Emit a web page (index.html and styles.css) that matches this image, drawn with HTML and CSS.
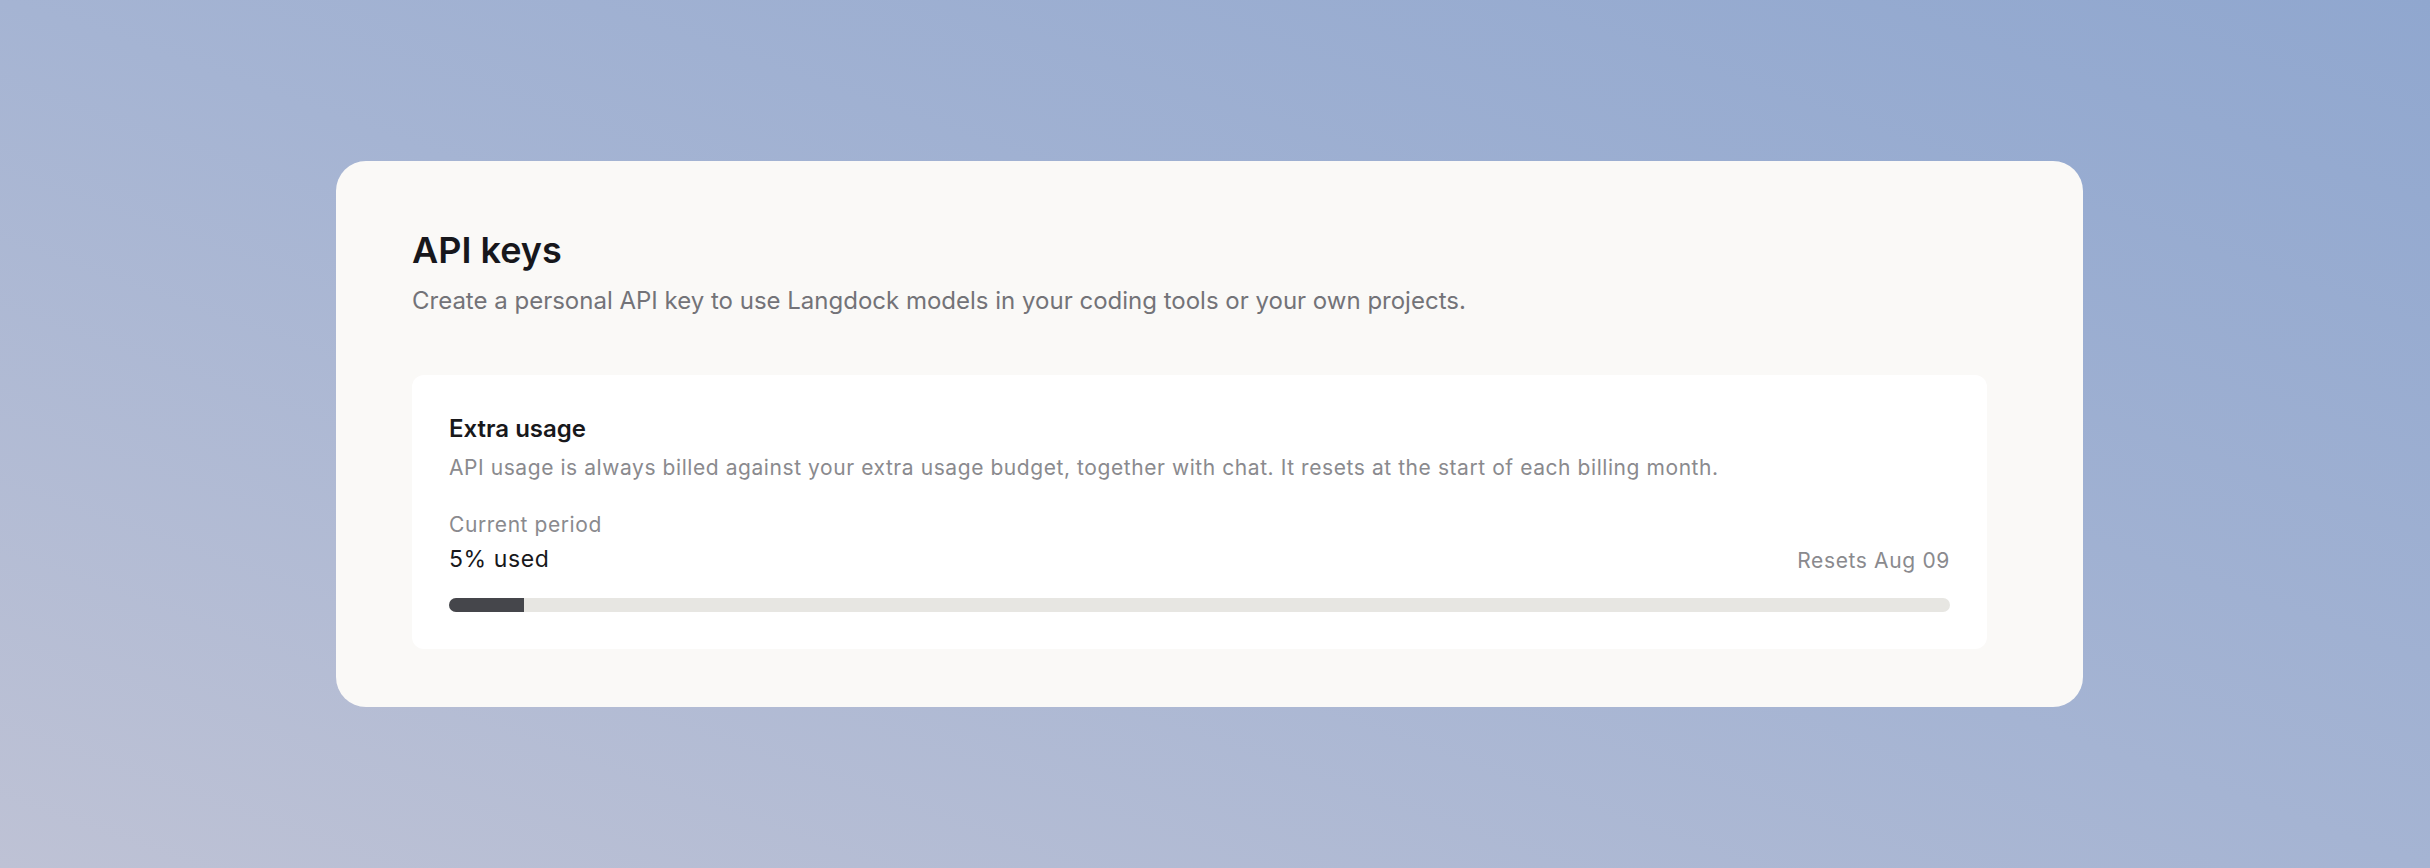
FILE: index.html
```html
<!DOCTYPE html>
<html lang="en">
<head>
  <meta charset="UTF-8">
  <title>API keys</title>
  <link rel="stylesheet" href="styles.css">
</head>
<body>
  <div class="page">
    <div class="card">
      <h1>API keys</h1>
      <p class="subtitle">Create a personal API key to use Langdock models in your coding tools or your own projects.</p>

      <div class="usage-panel">
        <div class="usage-title">Extra usage</div>
        <div class="usage-desc">API usage is always billed against your extra usage budget, together with chat. It resets at the start of each billing month.</div>

        <div class="period-label">Current period</div>
        <div class="period-row">
          <span class="used">5% used</span>
          <span class="resets">Resets Aug 09</span>
        </div>
        <div class="track">
          <div class="fill" style="width:5%"></div>
        </div>
      </div>
    </div>
  </div>
</body>
</html>
```

FILE: styles.css
```css
html, body { margin: 0; height: 100%; }
body {
  font-family: Inter, "Noto Sans", sans-serif;
  background: linear-gradient(to bottom left, #90a7cf 0%, #a5b4d3 50%, #bec2d5 100%);
  overflow: hidden;
}
.page { padding: 161px 0 0 336px; }

.card {
  width: 1747px;
  box-sizing: border-box;
  padding: 67px 96px 58px 76px;
  background: #faf9f7;
  border-radius: 30px;
}
h1 { margin: 0; font-size: 36px; line-height: 44px; font-weight: 600; color: #17171c; }
.subtitle { margin: 13px 0 0; font-size: 24px; line-height: 32px; color: #737378; }

.usage-panel {
  margin-top: 58px;
  padding: 38px 37px 37px;
  background: #fff;
  border-radius: 12px;
}
.usage-title { font-size: 24px; line-height: 32px; font-weight: 600; color: #18181b; }
.usage-desc { margin-top: 9px; font-size: 21px; line-height: 28px; letter-spacing: 0.57px; color: #8a8a8e; }

.period-label { margin-top: 29px; font-size: 21px; line-height: 28px; letter-spacing: 0.57px; color: #8a8a8e; }
.period-row { margin-top: 5px; display: flex; justify-content: space-between; align-items: flex-end; }
.used { font-size: 23px; line-height: 30px; letter-spacing: 0.6px; color: #18181b; }
.resets { font-size: 21px; line-height: 26px; letter-spacing: 0.65px; color: #8a8a8e; }

.track { margin-top: 24px; height: 14px; background: #e7e6e2; border-radius: 7px; overflow: hidden; }
.fill { height: 100%; background: #45464b; }
```
